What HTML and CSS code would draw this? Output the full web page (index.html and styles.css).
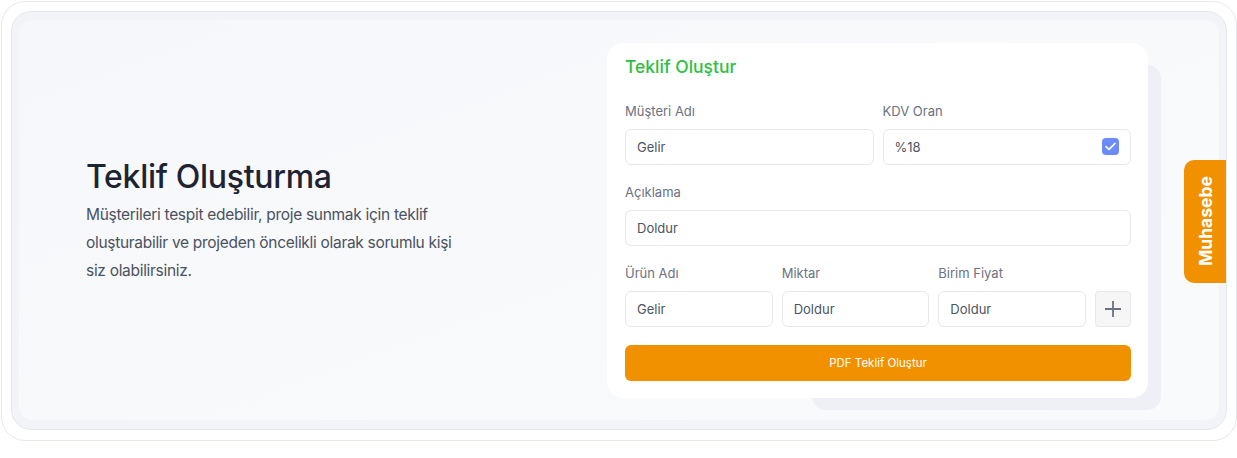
FILE: index.html
```html
<!DOCTYPE html>
<html>
<head>
    <link rel="stylesheet" href="styles.css">
</head>
<body>
    <div class="frame">
        <div class="frame-inner">
            <div class="hero">
                <div class="intro">
                    <h1>Teklif Oluşturma</h1>
                    <p>Müşterileri tespit edebilir, proje sunmak için teklif oluşturabilir ve projeden öncelikli olarak sorumlu kişi siz olabilirsiniz.</p>
                </div>
                <div class="card-wrap">
                    <div class="card">
                        <h2>Teklif Oluştur</h2>
                        <div class="row two">
                            <div class="field">
                                <label>Müşteri Adı</label>
                                <div class="input">Gelir</div>
                            </div>
                            <div class="field">
                                <label>KDV Oran</label>
                                <div class="input">
                                    <span>%18</span>
                                    <span class="check">
                                        <svg width="11" height="9" viewBox="0 0 11 9"><path d="M1 4.6 L4 7.4 L10 1.4" fill="none" stroke="#fff" stroke-width="1.6" stroke-linecap="round" stroke-linejoin="round"/></svg>
                                    </span>
                                </div>
                            </div>
                        </div>
                        <div class="row">
                            <div class="field">
                                <label>Açıklama</label>
                                <div class="input">Doldur</div>
                            </div>
                        </div>
                        <div class="row items">
                            <div class="field">
                                <label>Ürün Adı</label>
                                <div class="input">Gelir</div>
                            </div>
                            <div class="field">
                                <label>Miktar</label>
                                <div class="input">Doldur</div>
                            </div>
                            <div class="field">
                                <label>Birim Fiyat</label>
                                <div class="input">Doldur</div>
                            </div>
                            <button class="add">
                                <svg width="18" height="18" viewBox="0 0 18 18"><path d="M9 1 V17 M1 9 H17" stroke="#6b7280" stroke-width="1.8"/></svg>
                            </button>
                        </div>
                        <button class="submit">PDF Teklif Oluştur</button>
                    </div>
                </div>
            </div>
            <div class="tab">Muhasebe</div>
        </div>
    </div>
</body>
</html>
```

FILE: styles.css
```css
body {
    margin: 0;
    padding: 1px;
    font-family: Inter, "Noto Sans", sans-serif;
    background: #fff;
}
.frame {
    width: 1216px;
    height: 420px;
    padding: 9px;
    border: 1px solid #e7e9ee;
    border-radius: 24px;
    background: #fff;
}
.frame-inner {
    position: relative;
    height: 400px;
    padding: 8px 7px 9px 7px;
    border: 1px solid #e4e7ec;
    border-radius: 20px;
    background: #f2f4f7;
}
.hero {
    display: flex;
    align-items: center;
    height: 400px;
    padding: 0 71px 0 67px;
    border-radius: 14px;
    background: linear-gradient(160deg, #f6f7fa 0%, #f8f9fb 45%, #f9fafc 100%);
}
.intro {
    flex: 1;
    padding-top: 2px;
}
.intro h1 {
    margin: 0 0 5px;
    font-size: 32px;
    font-weight: 500;
    color: #1d2330;
    letter-spacing: -0.3px;
}
.intro p {
    margin: 0;
    width: 375px;
    font-size: 15.5px;
    line-height: 28px;
    letter-spacing: -0.3px;
    color: #4a5260;
}
.card-wrap {
    position: relative;
    width: 541px;
}
.card-wrap::before {
    content: "";
    position: absolute;
    left: 205px;
    right: -13px;
    top: 22px;
    bottom: -12px;
    background: #eef0f5;
    border-radius: 14px;
}
.card {
    position: relative;
    padding: 13px 17px 17px 18px;
    background: #fff;
    border-radius: 16px;
}
.card h2 {
    margin: 0 0 26px;
    font-size: 17.5px;
    font-weight: 500;
    color: #2fbe43;
}
.row {
    display: flex;
    gap: 9px;
}
.row + .row {
    margin-top: 19px;
}
.row + .row.items {
    margin-top: 19px;
    margin-bottom: 18px;
}
.field {
    flex: 1;
}
.field label {
    display: block;
    margin-bottom: 10px;
    font-size: 13px;
    color: #6b7280;
}
.input {
    display: flex;
    align-items: center;
    justify-content: space-between;
    height: 34px;
    padding: 0 11px;
    border: 1px solid #e6e8ec;
    border-radius: 6px;
    font-size: 13px;
    color: #4b5563;
}
.check {
    display: flex;
    align-items: center;
    justify-content: center;
    width: 17px;
    height: 17px;
    border-radius: 4px;
    background: #6b8bfb;
}
.add {
    align-self: flex-end;
    display: flex;
    align-items: center;
    justify-content: center;
    width: 36px;
    height: 36px;
    padding: 0;
    border: 1px solid #e6e8ec;
    border-radius: 4px;
    background: #f6f6f7;
}
.submit {
    display: block;
    width: 100%;
    height: 36px;
    border: none;
    border-radius: 6px;
    background: #f29100;
    color: #fff;
    font-family: Inter, "Noto Sans", sans-serif;
    font-size: 11.5px;
}
.tab {
    position: absolute;
    right: 0;
    top: 148px;
    width: 42px;
    height: 123px;
    border-radius: 0 10px 10px 0;
    background: #f29100;
    color: #fff;
    font-size: 17.5px;
    font-weight: 700;
    display: flex;
    align-items: center;
    justify-content: center;
    writing-mode: vertical-rl;
    transform: rotate(180deg);
}
```
